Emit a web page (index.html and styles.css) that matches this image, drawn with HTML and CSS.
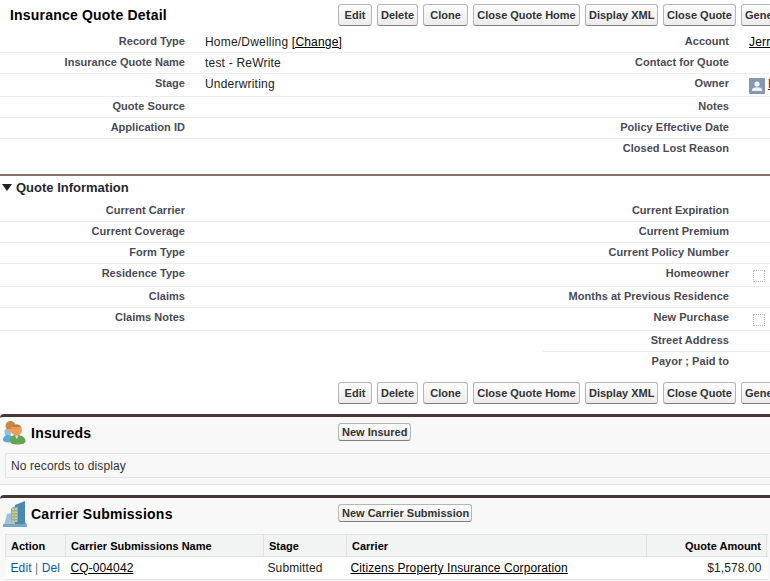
FILE: index.html
```html
<!DOCTYPE html>
<html lang="en">
<head>
    <meta charset="UTF-8">
    <title>Insurance Quote Detail</title>
    <link rel="stylesheet" href="styles.css">
</head>
<body>
<div class="page">
    <!-- Top title and buttons -->
    <div class="topbar">
        <h2 class="title">Insurance Quote Detail</h2>
        <div class="buttons">
            <button class="btn btn-edit">Edit</button>
            <button class="btn btn-delete">Delete</button>
            <button class="btn btn-clone">Clone</button>
            <button class="btn btn-home">Close Quote Home</button>
            <button class="btn btn-xml">Display XML</button>
            <button class="btn btn-close">Close Quote</button>
            <button class="btn">Generate Quote</button>
        </div>
    </div>

    <div class="row">
        <div class="label">Record Type</div>
        <div class="data">Home/Dwelling <a href="#">[Change]</a></div>
        <div class="label">Account</div>
        <div class="data"><a href="#">Jerry Smith</a></div>
    </div>
    <div class="row">
        <div class="label">Insurance Quote Name</div>
        <div class="data">test - ReWrite</div>
        <div class="label">Contact for Quote</div>
        <div class="data"></div>
    </div>
    <div class="row tall">
        <div class="label">Stage</div>
        <div class="data">Underwriting</div>
        <div class="label">Owner</div>
        <div class="data owner">
            <svg class="avatar" viewBox="0 0 16 16" width="16" height="16">
                <rect width="16" height="16" rx="1" fill="#8497b5"/>
                <circle cx="8" cy="6" r="2.6" fill="#eef1f6"/>
                <path d="M3 13v-1.5c0-1.3 2.5-2.2 5-2.2s5 .9 5 2.2V13z" fill="#eef1f6"/>
            </svg>
            <a class="owner-link" href="#">Robert Jones</a>
        </div>
    </div>
    <div class="row">
        <div class="label">Quote Source</div>
        <div class="data"></div>
        <div class="label">Notes</div>
        <div class="data"></div>
    </div>
    <div class="row">
        <div class="label">Application ID</div>
        <div class="data"></div>
        <div class="label">Policy Effective Date</div>
        <div class="data"></div>
    </div>
    <div class="row last">
        <div class="label"></div>
        <div class="data"></div>
        <div class="label">Closed Lost Reason</div>
        <div class="data"></div>
    </div>

    <!-- Quote Information section -->
    <div class="section-head">
        <span class="twist"></span>
        <h3>Quote Information</h3>
    </div>
    <div class="row">
        <div class="label">Current Carrier</div>
        <div class="data"></div>
        <div class="label">Current Expiration</div>
        <div class="data"></div>
    </div>
    <div class="row">
        <div class="label">Current Coverage</div>
        <div class="data"></div>
        <div class="label">Current Premium</div>
        <div class="data"></div>
    </div>
    <div class="row">
        <div class="label">Form Type</div>
        <div class="data"></div>
        <div class="label">Current Policy Number</div>
        <div class="data"></div>
    </div>
    <div class="row tall">
        <div class="label">Residence Type</div>
        <div class="data"></div>
        <div class="label">Homeowner</div>
        <div class="data"><span class="check"></span></div>
    </div>
    <div class="row">
        <div class="label">Claims</div>
        <div class="data"></div>
        <div class="label">Months at Previous Residence</div>
        <div class="data"></div>
    </div>
    <div class="row tall">
        <div class="label">Claims Notes</div>
        <div class="data"></div>
        <div class="label">New Purchase</div>
        <div class="data"><span class="check"></span></div>
    </div>
    <div class="row half">
        <div class="empty"></div>
        <div class="label">Street Address</div>
        <div class="data"></div>
    </div>
    <div class="row half last">
        <div class="empty"></div>
        <div class="label">Payor ; Paid to</div>
        <div class="data"></div>
    </div>

    <div class="bottom-buttons">
        <button class="btn btn-edit">Edit</button>
        <button class="btn btn-delete">Delete</button>
        <button class="btn btn-clone">Clone</button>
        <button class="btn btn-home">Close Quote Home</button>
        <button class="btn btn-xml">Display XML</button>
        <button class="btn btn-close">Close Quote</button>
        <button class="btn">Generate Quote</button>
    </div>

    <!-- Insureds related list -->
    <div class="related">
        <div class="related-head">
            <svg class="related-icon people" viewBox="0 0 24 24" width="24" height="24">
                <circle cx="5" cy="11" r="3.6" fill="#8cc4e4"/>
                <path d="M0 19c0-3 2-5 5-5s6 2 6 5c0 1.500-2 2.500-5.500 2.500S0 20.500 0 19z" fill="#5fa8d6"/>
                <circle cx="7.500" cy="5" r="5" fill="#c58a48"/>
                <path d="M3 8c1 3 3 4 5 4l2-4z" fill="#e0a870"/>
                <circle cx="13.500" cy="9" r="5.500" fill="#ea9c58"/>
                <path d="M8 5.500c2-2 7-3 10 0-2 1-7 1-10 0z" fill="#b97a3c"/>
                <path d="M7 20c0-4.500 2.500-6 6.500-6s9 1.500 9 6c0 2.500-3.500 3.500-8 3.500S7 22.500 7 20z" fill="#65a552"/>
                <path d="M12 14.500h3.500l-1.750 3.500z" fill="#e8ecd8"/>
            </svg>
            <h3 class="related-title">Insureds</h3>
            <button class="btn small btn-insured">New Insured</button>
        </div>
        <div class="no-records">No records to display</div>
    </div>

    <!-- Carrier Submissions related list -->
    <div class="related carrier">
        <div class="related-head">
            <svg class="related-icon" viewBox="0 0 24 26" width="24" height="26">
                <path d="M1 24l3-11 4-1V7l6-3v20z" fill="#9cc3dc"/>
                <path d="M12 4l10-4v21l2 4H12z" fill="#4a8ab2"/>
                <path d="M8 8l7-2.500V21H8z" fill="#7fb0c4"/>
                <path d="M9 7.500h5V9H9zM9 10.500h5V12H9zM9 13.500h5V15H9zM9 16.500h5V18H9zM9 19.500h5V21H9z" fill="#e3d067"/>
                <path d="M10.800 7h1.200v15h-1.200z" fill="#a9b98c"/>
                <path d="M0 23h24l.5 3H0z" fill="#7ba6c2"/>
            </svg>
            <h3 class="related-title">Carrier Submissions</h3>
            <button class="btn small btn-carrier">New Carrier Submission</button>
        </div>
        <table class="list">
            <tr>
                <th class="col-action">Action</th>
                <th class="col-name">Carrier Submissions Name</th>
                <th class="col-stage">Stage</th>
                <th class="col-carrier">Carrier</th>
                <th class="col-amount">Quote Amount</th>
                <th></th>
            </tr>
            <tr>
                <td class="actions"><a href="#">Edit</a> | <a href="#">Del</a></td>
                <td class="rec-name"><a href="#">CQ-004042</a></td>
                <td>Submitted</td>
                <td><a href="#">Citizens Property Insurance Corporation</a></td>
                <td class="amount">$1,578.00</td>
                <td></td>
            </tr>
        </table>
    </div>
</div>
</body>
</html>
```

FILE: styles.css
```css
* {
    margin: 0;
    padding: 0;
    box-sizing: border-box;
}

html, body {
    height: 100%;
    overflow: hidden;
    background: white;
}

body {
    font-family: "Liberation Sans", Arial, sans-serif;
    font-size: 12px;
    color: #222;
}

.page {
    width: 1000px;
}

a {
    color: #000;
}

/* Title and button bars */
.topbar {
    display: flex;
    height: 32px;
    padding-top: 4px;
}

.title {
    width: 338px;
    padding-left: 10px;
    font-size: 14px;
    line-height: 22px;
    color: #000;
    letter-spacing: 0.2px;
}

.buttons,
.bottom-buttons {
    display: flex;
    gap: 5px;
}

.bottom-buttons {
    padding: 9px 0 10px 338px;
}

.btn {
    height: 22px;
    padding: 0 3px;
    font-family: inherit;
    font-size: 11px;
    font-weight: bold;
    white-space: nowrap;
    color: #333;
    background: linear-gradient(#fdfdfd, #ececec);
    border: 1px solid #b5b5b5;
    border-bottom-color: #7f7f7f;
    border-radius: 3px;
}

.btn-edit { width: 34px; }
.btn-delete { width: 41px; }
.btn-clone { width: 45px; }
.btn-home { width: 107px; }
.btn-xml { width: 73px; }
.btn-close { width: 73px; }
.btn-insured { width: 73px; }
.btn-carrier { width: 134px; }

.btn.small {
    height: 18px;
    margin-top: 6px;
}

/* Detail rows */
.row {
    display: grid;
    grid-template-columns: 195px 348px 196px 1fr;
    height: 21px;
}

.row.tall {
    height: 23px;
}

.row.half {
    grid-template-columns: 543px 196px 1fr;
}

.label,
.data {
    padding-top: 3px;
    border-bottom: 1px solid #ececec;
    white-space: nowrap;
}

.label {
    padding-right: 10px;
    text-align: right;
    font-size: 11px;
    font-weight: bold;
    letter-spacing: 0.03px;
    color: #4a4a56;
}

.data {
    padding-left: 10px;
    letter-spacing: 0.2px;
}

.row.last .label,
.row.last .data {
    border-bottom: none;
}

.owner {
    display: flex;
    gap: 3px;
}

.avatar {
    flex: none;
    margin-top: 1px;
}

.owner-link {
    color: #800000;
}

.check {
    display: block;
    width: 12px;
    height: 12px;
    margin: 3px 0 0 4px;
    border: 1px dotted #bdbdbd;
}

/* Section header */
.section-head {
    display: flex;
    align-items: center;
    gap: 4px;
    height: 27px;
    margin-top: 14px;
    padding: 0 0 2px 2px;
    border-top: 2px solid #8a706a;
}

.section-head h3 {
    font-size: 13px;
    line-height: 22px;
    color: #27282e;
}

.twist {
    width: 0;
    height: 0;
    border-left: 5px solid transparent;
    border-right: 5px solid transparent;
    border-top: 7px solid #222;
}

/* Related lists */
.related {
    height: 71px;
    margin-bottom: 10px;
    background: #f8f8f8;
    border-top: 3px solid #4a3535;
    border-bottom: 1px solid #e0e3e5;
    border-radius: 4px 4px 0 0;
}

.related.carrier {
    height: 90px;
    margin-bottom: 0;
    border-bottom: none;
}

.related-head {
    display: flex;
    height: 36px;
    padding-left: 3px;
}

.related-icon {
    flex: none;
    margin-top: 3px;
}

.related-icon.people {
    margin-top: 4px;
}

.related-title {
    width: 311px;
    padding-left: 4px;
    font-size: 14px;
    line-height: 32px;
    letter-spacing: 0.25px;
    color: #000;
}

.no-records {
    height: 25px;
    margin-left: 5px;
    padding: 5px;
    border: 1px solid #e0e3e5;
    letter-spacing: 0.1px;
    color: #333;
}

.list {
    width: 763px;
    margin-left: 5px;
    table-layout: fixed;
    border-collapse: collapse;
    border-top: 1px solid #e0e3e5;
}

.list th {
    height: 22px;
    padding: 0 5px;
    text-align: left;
    font-size: 11px;
    color: #000;
    background: #f2f3f3;
    border-left: 1px solid #e0e3e5;
    border-bottom: 1px solid #e0e3e5;
}

.list td {
    height: 23px;
    padding: 0 4px;
    letter-spacing: 0.1px;
    background: white;
    border-bottom: 1px solid #e3e3e3;
    white-space: nowrap;
}

.col-action { width: 60px; }
.col-name { width: 198px; }
.col-stage { width: 83px; }
.col-carrier { width: 300px; }
.col-amount { width: 120px; }

.list th.col-amount,
.list td.amount {
    padding-right: 5px;
    text-align: right;
}

.list td.actions,
.list td.rec-name {
    padding-left: 5px;
}

.list td.actions {
    color: #777;
}

.actions a {
    color: #015ba7;
    text-decoration: none;
}
```
